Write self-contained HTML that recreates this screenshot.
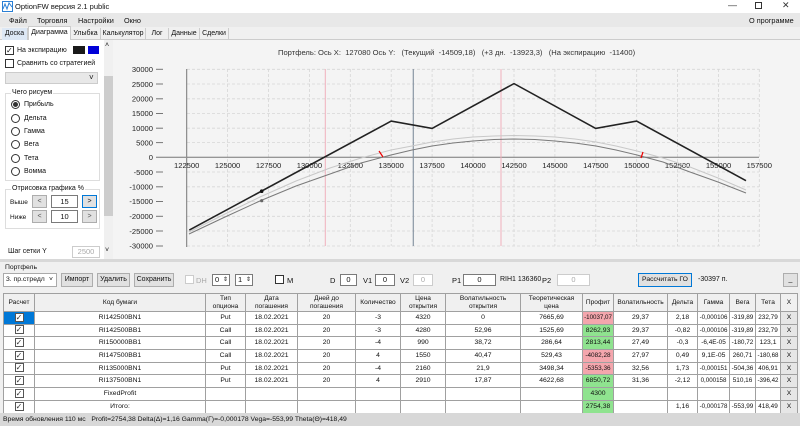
<!DOCTYPE html><html><head><meta charset="utf-8"><style>
*{box-sizing:border-box;margin:0;padding:0}
body{width:800px;height:426px;overflow:hidden;background:#f0f0f0;font-family:"Liberation Sans",sans-serif;font-size:7.5px;color:#111;position:relative}
.a{position:absolute;white-space:nowrap}
.btn{position:absolute;background:#e1e1e1;border:1px solid #adadad;text-align:center;line-height:12px;font-size:7px;white-space:nowrap;overflow:hidden}
.tb{position:absolute;background:#fff;border:1px solid #7a7a7a;text-align:center;line-height:12px;font-size:7.5px}
.cb{position:absolute;width:9px;height:9px;border:1px solid #333;background:#fff}
.rd{position:absolute;width:9px;height:9px;border:1px solid #333;border-radius:50%;background:#fff}
.tab{position:absolute;top:28px;height:12px;line-height:12px;font-size:7px;border-right:1px solid #ccc;text-align:center;white-space:nowrap;overflow:hidden}
table{position:absolute;left:3px;top:293px;width:794px;border-collapse:collapse;background:#fff;font-size:6.8px;table-layout:fixed}
td,th{border:1px solid #a0a0a0;text-align:center;height:12.7px;line-height:10px;padding:0;overflow:hidden;white-space:nowrap;font-weight:normal}
th{background:#f0f0f0;height:18px;line-height:8px;white-space:normal;font-size:6.6px}
.g{background:#8fe38f}.r{background:#f4a6ad}
td.x{background:#e6e6e6}
.ck{display:inline-block;width:9px;height:9px;border:1px solid #555;font-size:8px;line-height:7px;color:#333;vertical-align:middle}
</style></head><body>
<div class="a" style="left:0;top:0;width:800px;height:13px;background:#fff"></div>
<svg class="a" style="left:2px;top:1px" width="11" height="11"><rect x="0.5" y="0.5" width="10" height="10" fill="#fff" stroke="#2a7fd4"/><path d="M1 8 L3 3 L5 8 L7 2 L10 6" stroke="#2a7fd4" fill="none"/></svg>
<div class="a" style="left:15px;top:2px;font-size:7.5px">OptionFW версия 2.1 public</div>
<div class="a" style="left:728px;top:0;font-size:9px;color:#333">—</div>
<div class="a" style="left:755px;top:2px;width:7px;height:7px;border:1px solid #333"></div>
<div class="a" style="left:782px;top:0;font-size:9px;color:#333">✕</div>
<div class="a" style="left:0;top:13px;width:800px;height:14px;background:#e8e8e8"></div>
<div class="a" style="left:9px;top:16px;font-size:7.3px">Файл</div>
<div class="a" style="left:37px;top:16px;font-size:7.3px">Торговля</div>
<div class="a" style="left:78px;top:16px;font-size:7.3px">Настройки</div>
<div class="a" style="left:124px;top:16px;font-size:7.3px">Окно</div>
<div class="a" style="left:749px;top:16px;font-size:7.3px">О программе</div>
<div class="a" style="left:0;top:27px;width:800px;height:13px;background:#f0f0f0;border-bottom:1px solid #ccc"></div>
<div class="tab" style="left:2px;width:26px;background:#dde8f5">Доска</div>
<div class="tab" style="left:28px;width:43px;top:26px;height:14px;background:#fff;border:1px solid #ccc;border-bottom:none">Диаграмма</div>
<div class="tab" style="left:71px;width:30px">Улыбка</div>
<div class="tab" style="left:101px;width:45px">Калькулятор</div>
<div class="tab" style="left:146px;width:23px">Лог</div>
<div class="tab" style="left:169px;width:31px">Данные</div>
<div class="tab" style="left:200px;width:29px">Сделки</div>
<div class="a" style="left:0;top:40px;width:104px;height:220px;background:#fff"></div>
<div class="a" style="left:104px;top:40px;width:9px;height:220px;background:#f0f0f0"></div>
<div class="a" style="left:104px;top:76px;width:9px;height:140px;background:#cdcdcd"></div>
<div class="a" style="left:105px;top:42px;font-size:7px">˄</div>
<div class="a" style="left:105px;top:247px;font-size:7px">˅</div>
<div class="cb" style="left:5px;top:46px;font-size:8px;line-height:7px">✓</div>
<div class="a" style="left:17px;top:47px;font-size:7px">На экспирацию</div>
<div class="a" style="left:73px;top:46px;width:12px;height:8px;background:#1a1a1a"></div>
<div class="a" style="left:88px;top:46px;width:11px;height:8px;background:#0000d8"></div>
<div class="cb" style="left:5px;top:59px"></div>
<div class="a" style="left:17px;top:60px;font-size:7px">Сравнить со стратегией</div>
<div class="a" style="left:5px;top:72px;width:93px;height:12px;background:#e8e8e8;border:1px solid #ccc"></div>
<div class="a" style="left:89px;top:73px;font-size:8px">˅</div>
<div class="a" style="left:5px;top:93px;width:95px;height:88px;border:1px solid #ddd"></div>
<div class="a" style="left:11px;top:89px;background:#fff;padding:0 1px;font-size:7px">Чего рисуем</div>
<div class="rd" style="left:11px;top:100px"><div style="width:5px;height:5px;margin:1px;border-radius:50%;background:#333"></div></div>
<div class="a" style="left:24px;top:101px;font-size:7px">Прибыль</div>
<div class="rd" style="left:11px;top:114px"></div><div class="a" style="left:24px;top:115px;font-size:7px">Дельта</div>
<div class="rd" style="left:11px;top:127px"></div><div class="a" style="left:24px;top:128px;font-size:7px">Гамма</div>
<div class="rd" style="left:11px;top:140px"></div><div class="a" style="left:24px;top:141px;font-size:7px">Вега</div>
<div class="rd" style="left:11px;top:154px"></div><div class="a" style="left:24px;top:155px;font-size:7px">Тета</div>
<div class="rd" style="left:11px;top:167px"></div><div class="a" style="left:24px;top:168px;font-size:7px">Вомма</div>
<div class="a" style="left:5px;top:189px;width:95px;height:40px;border:1px solid #ddd"></div>
<div class="a" style="left:11px;top:185px;background:#fff;padding:0 1px;font-size:7px">Отрисовка графика %</div>
<div class="a" style="left:10px;top:199px;font-size:6.5px">Выше</div>
<div class="btn" style="left:32px;top:195px;width:15px;height:13px;color:#555">&lt;</div>
<div class="tb" style="left:51px;top:195px;width:27px;height:13px">15</div>
<div class="btn" style="left:82px;top:195px;width:15px;height:13px;border:1px solid #0078d7">&gt;</div>
<div class="a" style="left:10px;top:214px;font-size:6.5px">Ниже</div>
<div class="btn" style="left:32px;top:210px;width:15px;height:13px;color:#555">&lt;</div>
<div class="tb" style="left:51px;top:210px;width:27px;height:13px">10</div>
<div class="btn" style="left:82px;top:210px;width:15px;height:13px;color:#555">&gt;</div>
<div class="a" style="left:8px;top:248px;font-size:7px">Шаг сетки Y</div>
<div class="a" style="left:72px;top:246px;width:28px;height:12px;border:1px solid #ccc;color:#aaa;text-align:center;line-height:10px">2500</div>
<div class="a" style="left:113px;top:40px;width:687px;height:220px;background:#f4f4f4"></div>
<div class="a" style="left:278px;top:48px;font-size:7.6px;color:#333">Портфель: Ось X:&nbsp; 127080 Ось Y:&nbsp;&nbsp; (Текущий&nbsp; -14509,18)&nbsp;&nbsp; (+3 дн.&nbsp; -13923,3)&nbsp;&nbsp; (На экспирацию&nbsp; -11400)</div>
<svg class="a" style="left:0;top:0" width="800" height="260" font-family="Liberation Sans" font-size="7.6" fill="#222">
<g stroke="#d6d6d6" stroke-dasharray="3,2" stroke-width="0.8">
<line x1="227.6" y1="69" x2="227.6" y2="246"/><line x1="268.5" y1="69" x2="268.5" y2="246"/><line x1="309.4" y1="69" x2="309.4" y2="246"/><line x1="350.3" y1="69" x2="350.3" y2="246"/><line x1="391.2" y1="69" x2="391.2" y2="246"/><line x1="432.1" y1="69" x2="432.1" y2="246"/><line x1="473" y1="69" x2="473" y2="246"/><line x1="514" y1="69" x2="514" y2="246"/><line x1="554.9" y1="69" x2="554.9" y2="246"/><line x1="595.8" y1="69" x2="595.8" y2="246"/><line x1="636.7" y1="69" x2="636.7" y2="246"/><line x1="677.6" y1="69" x2="677.6" y2="246"/><line x1="718.5" y1="69" x2="718.5" y2="246"/><line x1="759.3" y1="69" x2="759.3" y2="246"/>
<line x1="187" y1="69.3" x2="759" y2="69.3"/><line x1="187" y1="84" x2="759" y2="84"/><line x1="187" y1="98.8" x2="759" y2="98.8"/><line x1="187" y1="113.5" x2="759" y2="113.5"/><line x1="187" y1="128.2" x2="759" y2="128.2"/><line x1="187" y1="142.6" x2="759" y2="142.6"/><line x1="187" y1="172" x2="759" y2="172"/><line x1="187" y1="186.8" x2="759" y2="186.8"/><line x1="187" y1="201.5" x2="759" y2="201.5"/><line x1="187" y1="216.3" x2="759" y2="216.3"/><line x1="187" y1="231" x2="759" y2="231"/><line x1="187" y1="246" x2="759" y2="246"/>
</g>
<line x1="186.7" y1="69" x2="186.7" y2="247" stroke="#777"/>
<line x1="186.7" y1="157.3" x2="759" y2="157.3" stroke="#777"/>
<line x1="325.3" y1="69" x2="325.3" y2="246" stroke="#f0b0bc"/>
<line x1="501" y1="69" x2="501" y2="246" stroke="#f0b0bc"/>
<line x1="413.3" y1="69" x2="413.3" y2="246" stroke="#8a96a4" stroke-width="1.2"/>
<g text-anchor="end">
<text x="153" y="72">30000</text><text x="153" y="87">25000</text><text x="153" y="101.5">20000</text><text x="153" y="116">15000</text><text x="153" y="131">10000</text><text x="153" y="145.5">5000</text><text x="153" y="160">0</text><text x="153" y="175">-5000</text><text x="153" y="189.5">-10000</text><text x="153" y="204">-15000</text><text x="153" y="219">-20000</text><text x="153" y="234">-25000</text><text x="153" y="248.5">-30000</text>
</g>
<g stroke="#777"><line x1="156" y1="69.3" x2="163" y2="69.3"/><line x1="156" y1="84" x2="163" y2="84"/><line x1="156" y1="98.8" x2="163" y2="98.8"/><line x1="156" y1="113.5" x2="163" y2="113.5"/><line x1="156" y1="128.2" x2="163" y2="128.2"/><line x1="156" y1="142.6" x2="163" y2="142.6"/><line x1="156" y1="157.3" x2="186" y2="157.3"/><line x1="156" y1="172" x2="163" y2="172"/><line x1="156" y1="186.8" x2="163" y2="186.8"/><line x1="156" y1="201.5" x2="163" y2="201.5"/><line x1="156" y1="216.3" x2="163" y2="216.3"/><line x1="156" y1="231" x2="163" y2="231"/><line x1="156" y1="246" x2="163" y2="246"/></g>
<g text-anchor="middle">
<text x="186.7" y="168">122500</text><text x="227.6" y="168">125000</text><text x="268.5" y="168">127500</text><text x="309.4" y="168">130000</text><text x="350.3" y="168">132500</text><text x="391.2" y="168">135000</text><text x="432.1" y="168">137500</text><text x="473" y="168">140000</text><text x="514" y="168">142500</text><text x="554.9" y="168">145000</text><text x="595.8" y="168">147500</text><text x="636.7" y="168">150000</text><text x="677.6" y="168">152500</text><text x="718.5" y="168">155000</text><text x="759.3" y="168">157500</text>
</g>
<polyline fill="none" stroke="#c8c8c8" stroke-width="1" points="189,232 225,214 261,196.5 296,181 330,168 361,158 391,150 412,146 432,142 453,139 473,137 494,136 514,135.5 535,136 555,137 575,139 596,142 616,146 637,151 663,158 690,167 718,178 746,190"/>
<polyline fill="none" stroke="#7a7a7a" stroke-width="1" points="189,234 225,217 261,200.5 296,186 330,174 361,163 391,155 412,150 432,146 453,143 473,141 494,139.5 514,139 535,139.5 555,141 575,143 596,146 616,150 637,155 663,162 690,172 718,182 746,193"/>
<polyline fill="none" stroke="#222" stroke-width="1.6" points="189.3,230.1 391.2,121.1 432.1,128.4 514,83.6 595.7,128.4 636.6,121.1 746,180.7"/>
<circle cx="261.7" cy="191.2" r="1.8" fill="#111"/>
<circle cx="261.7" cy="200.7" r="1.6" fill="#666"/>
<path d="M379 151 L383 157" stroke="#e00" stroke-width="1.2"/>
<path d="M643 152 L641 158" stroke="#e00" stroke-width="1.2"/>
</svg>
<div class="a" style="left:0;top:259px;width:800px;height:3px;background:#d8d8d8"></div>
<div class="a" style="left:5px;top:264px;font-size:6.8px">Портфель</div>
<div class="a" style="left:3px;top:273px;width:54px;height:14px;background:#fff;border:1px solid #aaa;line-height:12px;padding-left:2px;font-size:6.8px">3. пр.стредл <span style="position:absolute;left:45px">˅</span></div>
<div class="btn" style="left:61px;top:273px;width:32px;height:14px">Импорт</div>
<div class="btn" style="left:97px;top:273px;width:33px;height:14px">Удалить</div>
<div class="btn" style="left:134px;top:273px;width:40px;height:14px">Сохранить</div>
<div class="cb" style="left:185px;top:275px;border-color:#ccc"></div>
<div class="a" style="left:196px;top:276px;color:#aaa">DH</div>
<div class="tb" style="left:212px;top:274px;width:18px;height:12px;text-align:left;padding-left:2px;line-height:10px">0 <span style="position:absolute;right:1px;font-size:6px">⇕</span></div>
<div class="tb" style="left:235px;top:274px;width:18px;height:12px;text-align:left;padding-left:2px;line-height:10px">1 <span style="position:absolute;right:1px;font-size:6px">⇕</span></div>
<div class="cb" style="left:275px;top:275px"></div>
<div class="a" style="left:287px;top:276px">M</div>
<div class="a" style="left:330px;top:276px">D</div>
<div class="tb" style="left:340px;top:274px;width:17px;height:12px;line-height:10px">0</div>
<div class="a" style="left:363px;top:276px">V1</div>
<div class="tb" style="left:375px;top:274px;width:20px;height:12px;line-height:10px">0</div>
<div class="a" style="left:400px;top:276px">V2</div>
<div class="tb" style="left:413px;top:274px;width:20px;height:12px;line-height:10px;border-color:#ccc;color:#aaa">0</div>
<div class="a" style="left:452px;top:276px">P1</div>
<div class="tb" style="left:463px;top:274px;width:33px;height:12px;line-height:10px">0</div>
<div class="a" style="left:500px;top:276px;font-size:7px">RIH1 136360</div>
<div class="a" style="left:542px;top:276px">P2</div>
<div class="tb" style="left:557px;top:274px;width:33px;height:12px;line-height:10px;border-color:#ccc;color:#aaa">0</div>
<div class="btn" style="left:638px;top:273px;width:54px;height:14px;border:1px solid #0078d7;font-size:6.8px">Рассчитать ГО</div>
<div class="a" style="left:698px;top:276px;font-size:7px">-30397 п.</div>
<div class="btn" style="left:783px;top:273px;width:15px;height:14px">_</div>
<table>
<colgroup><col style="width:31px"><col style="width:171px"><col style="width:40px"><col style="width:52px"><col style="width:58px"><col style="width:45px"><col style="width:45px"><col style="width:75px"><col style="width:62px"><col style="width:31px"><col style="width:54px"><col style="width:30px"><col style="width:32px"><col style="width:26px"><col style="width:25px"><col style="width:17px"></colgroup>
<tr><th>Расчет</th><th>Код бумаги</th><th>Тип<br>опциона</th><th>Дата<br>погашения</th><th>Дней до<br>погашения</th><th>Количество</th><th>Цена<br>открытия</th><th>Волатильность<br>открытия</th><th>Теоретическая<br>цена</th><th>Профит</th><th>Волатильность</th><th>Дельта</th><th>Гамма</th><th>Вега</th><th>Тета</th><th>X</th></tr>
<tr><td style="background:#0078d7"><span class="ck" style="background:#fff">✓</span></td><td>RI142500BN1</td><td>Put</td><td>18.02.2021</td><td>20</td><td>-3</td><td>4320</td><td>0</td><td>7665,69</td><td class="r" style="font-size:6.2px">-10037,07</td><td>29,37</td><td>2,18</td><td style="font-size:6.2px">-0,000106</td><td style="font-size:6.4px">-319,89</td><td style="font-size:6.4px">232,79</td><td class="x">X</td></tr>
<tr><td><span class="ck">✓</span></td><td>RI142500BB1</td><td>Call</td><td>18.02.2021</td><td>20</td><td>-3</td><td>4280</td><td>52,96</td><td>1525,69</td><td class="g">8262,93</td><td>29,37</td><td>-0,82</td><td style="font-size:6.2px">-0,000106</td><td style="font-size:6.4px">-319,89</td><td style="font-size:6.4px">232,79</td><td class="x">X</td></tr>
<tr><td><span class="ck">✓</span></td><td>RI150000BB1</td><td>Call</td><td>18.02.2021</td><td>20</td><td>-4</td><td>990</td><td>38,72</td><td>286,64</td><td class="g">2813,44</td><td>27,49</td><td>-0,3</td><td style="font-size:6.4px">-6,4E-05</td><td style="font-size:6.4px">-180,72</td><td>123,1</td><td class="x">X</td></tr>
<tr><td><span class="ck">✓</span></td><td>RI147500BB1</td><td>Call</td><td>18.02.2021</td><td>20</td><td>4</td><td>1550</td><td>40,47</td><td>529,43</td><td class="r" style="font-size:6.4px">-4082,28</td><td>27,97</td><td>0,49</td><td>9,1E-05</td><td style="font-size:6.4px">260,71</td><td style="font-size:6.2px">-180,68</td><td class="x">X</td></tr>
<tr><td><span class="ck">✓</span></td><td>RI135000BN1</td><td>Put</td><td>18.02.2021</td><td>20</td><td>-4</td><td>2160</td><td>21,9</td><td>3498,34</td><td class="r" style="font-size:6.4px">-5353,36</td><td>32,56</td><td>1,73</td><td style="font-size:6.2px">-0,000151</td><td style="font-size:6.4px">-504,36</td><td style="font-size:6.4px">406,91</td><td class="x">X</td></tr>
<tr><td><span class="ck">✓</span></td><td>RI137500BN1</td><td>Put</td><td>18.02.2021</td><td>20</td><td>4</td><td>2910</td><td>17,87</td><td>4622,68</td><td class="g">6850,72</td><td>31,36</td><td>-2,12</td><td style="font-size:6.2px">0,000158</td><td style="font-size:6.4px">510,16</td><td style="font-size:6.2px">-396,42</td><td class="x">X</td></tr>
<tr><td><span class="ck">✓</span></td><td>FixedProfit</td><td></td><td></td><td></td><td></td><td></td><td></td><td></td><td class="g">4300</td><td></td><td></td><td></td><td></td><td></td><td class="x">X</td></tr>
<tr><td><span class="ck">✓</span></td><td>Итого:</td><td></td><td></td><td></td><td></td><td></td><td></td><td></td><td class="g">2754,38</td><td></td><td>1,16</td><td style="font-size:6.2px">-0,000178</td><td style="font-size:6.4px">-553,99</td><td style="font-size:6.4px">418,49</td><td class="x">X</td></tr>
</table>
<div class="a" style="left:0;top:413px;width:800px;height:13px;background:#d8d8d8"></div>
<div class="a" style="left:3px;top:416px;font-size:6.8px">Время обновления 110 мс&nbsp;&nbsp; Profit=2754,38 Delta(Δ)=1,16 Gamma(Γ)=-0,000178 Vega=-553,99 Theta(Θ)=418,49</div>
</body></html>
